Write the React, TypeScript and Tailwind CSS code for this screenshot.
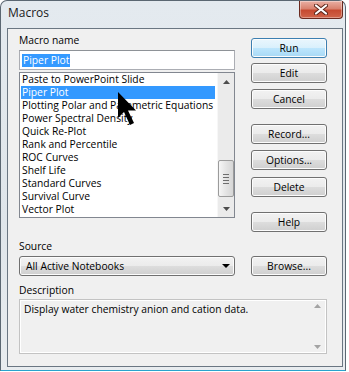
import React from "react";

const items = [
  "Paste to PowerPoint Slide",
  "Piper Plot",
  "Plotting Polar and Parametric Equations",
  "Power Spectral Density",
  "Quick Re-Plot",
  "Rank and Percentile",
  "ROC Curves",
  "Shelf Life",
  "Standard Curves",
  "Survival Curve",
  "Vector Plot",
];

// small scroll arrow glyph
function Arrow({ up, color = "#4d4d4d" }: { up?: boolean; color?: string }) {
  return (
    <svg width="7" height="4" viewBox="0 0 7 4">
      <polygon points={up ? "3.5,0 7,4 0,4" : "0,0 7,0 3.5,4"} fill={color} />
    </svg>
  );
}

function Btn({ label, main, className = "" }: { label: string; main?: boolean; className?: string }) {
  return (
    <button
      className={
        "h-[20px] w-[76px] rounded-[3px] border leading-[18px] text-black shadow-[inset_0_0_0_1px_#fcfcfc] " +
        (main
          ? "border-[#3c7fb1] bg-[linear-gradient(#eaf6fd_0%,#d9f0fc_50%,#bee6fd_50%,#a7d9f5_100%)] "
          : "border-[#707070] bg-[linear-gradient(#f2f2f2_0%,#ebebeb_50%,#dddddd_50%,#cfcfcf_100%)] ") +
        className
      }
    >
      {label}
    </button>
  );
}

export default function App() {
  return (
    <div className="relative h-[372px] w-[349px] bg-white font-['Open_Sans',sans-serif] text-[10.3px] text-black">
      {/* window frame */}
      <div className="flex h-[371px] w-[346px] flex-col rounded-t-[7px] border border-[#5b6772] border-b-[#2aa3cd] bg-[linear-gradient(#e4eaef,#dfe5ea_60%,#e8ecef)] pb-[3px] pl-[6px] pr-[2px]">
        {/* title bar */}
        <div className="flex h-[27px] shrink-0 items-start justify-between">
          <div className="mt-[4px] pl-[1px] text-[12px] leading-[16px] text-[#1b1b1b]">Macros</div>
          <div className="flex h-[18px] w-[44px] items-center justify-center rounded-b-[4px] border border-t-0 border-[#6b2a1f] bg-[linear-gradient(#eab0a4_0%,#d9826f_45%,#c64a30_55%,#d0654a_100%)] shadow-[inset_0_0_0_1px_rgba(255,255,255,0.35)]">
            <svg width="14" height="11" viewBox="0 0 14 11">
              <path d="M2 1.5 L12 9.5 M12 1.5 L2 9.5" stroke="#5a2418" strokeWidth="4" strokeLinecap="round" />
              <path d="M2 1.5 L12 9.5 M12 1.5 L2 9.5" stroke="#ffffff" strokeWidth="2.2" strokeLinecap="round" />
            </svg>
          </div>
        </div>

        {/* client area */}
        <div className="flex flex-1 flex-col border border-[#6a7682] bg-[#f0f0f0] pl-[11px] pt-[4px]">
          <div className="flex gap-[16px]">
            {/* left column */}
            <div className="flex w-[216px] flex-col">
              <div className="mb-[2px] h-[15px] leading-[15px]">Macro name</div>
              <div className="flex h-[20px] items-center border border-[#abadb3] border-t-[#8e9297] bg-white pl-[2px]">
                <span className="bg-[#3399ff] px-[1px] leading-[13px] text-white">Piper Plot</span>
              </div>
              <div className="mt-[2px] flex h-[146px] border border-[#828790] bg-white">
                <div className="flex-1 pl-[1px] pr-[2px]">
                  {items.map((it) => (
                    <div
                      key={it}
                      className={
                        "h-[13px] whitespace-nowrap pl-[1px] leading-[13px] " +
                        (it === "Piper Plot" ? "bg-[#3399ff] text-white" : "")
                      }
                    >
                      {it}
                    </div>
                  ))}
                </div>
                {/* scrollbar */}
                <div className="flex w-[17px] flex-col items-center border-l border-[#f7f7f7] bg-[#ebebeb]">
                  <div className="flex h-[17px] items-center">
                    <Arrow up />
                  </div>
                  <div className="mt-[70px] flex h-[37px] w-[16px] flex-col items-center justify-center gap-[2px] rounded-[2px] border border-[#9b9b9b] bg-[linear-gradient(90deg,#f6f6f6,#e4e4e4_50%,#d6d6d6)]">
                    <div className="h-px w-[6px] bg-[#6e6e6e]" />
                    <div className="h-px w-[6px] bg-[#6e6e6e]" />
                    <div className="h-px w-[6px] bg-[#6e6e6e]" />
                    <div className="h-px w-[6px] bg-[#6e6e6e]" />
                  </div>
                  <div className="mt-auto flex h-[17px] items-center">
                    <Arrow />
                  </div>
                </div>
              </div>
            </div>

            {/* right buttons */}
            <div className="flex flex-col pt-[5px]">
              <Btn label="Run" main />
              <Btn label="Edit" className="mt-[5px]" />
              <Btn label="Cancel" className="mt-[6px]" />
              <Btn label="Record..." className="mt-[15px]" />
              <Btn label="Options..." className="mt-[6px]" />
              <Btn label="Delete" className="mt-[7px]" />
              <Btn label="Help" className="mt-[15px]" />
            </div>
          </div>

          <div className="mt-[7px] mb-[2px] h-[15px] leading-[15px]">Source</div>
          <div className="flex gap-[16px]">
            <div className="flex h-[20px] w-[216px] items-center justify-between rounded-[3px] border border-[#707070] bg-[linear-gradient(#f2f2f2_0%,#ebebeb_50%,#dddddd_50%,#cfcfcf_100%)] pl-[6px] pr-[3px] shadow-[inset_0_0_0_1px_#fcfcfc]">
              <span className="leading-[18px]">All Active Notebooks</span>
              <svg width="8" height="4" viewBox="0 0 8 4" className="mr-[1px]">
                <polygon points="0,0 8,0 4,4" fill="#000" />
              </svg>
            </div>
            <Btn label="Browse..." />
          </div>

          <div className="mt-[7px] mb-[1px] h-[15px] leading-[15px]">Description</div>
          <div className="flex h-[55px] w-[308px] border border-[#c3c3c3] bg-[#f0f0f0] shadow-[inset_0_0_0_1px_#ffffff]">
            <div className="flex-1 pl-[4px] pt-[2px] leading-[15px]">Display water chemistry anion and cation data.</div>
            <div className="flex w-[17px] flex-col items-center justify-between py-[4px]">
              <Arrow up color="#a3a3a3" />
              <Arrow color="#a3a3a3" />
            </div>
          </div>
        </div>
      </div>

      {/* mouse pointer over the list */}
      <svg className="absolute left-[117px] top-[91px]" width="22" height="36" viewBox="0 0 22 36">
        <polygon points="1,1 1,27 7,21 13,34 17,32 11,19.5 19,19.5" fill="#000" />
      </svg>
    </div>
  );
}
